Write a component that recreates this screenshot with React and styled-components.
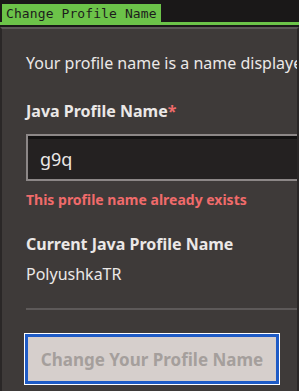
import React from 'react';
import styled, {createGlobalStyle} from 'styled-components';

const GlobalStyle = createGlobalStyle`
    html, body {
        margin: 0;
        padding: 0;
        background: #1a1818;
    }
    * {
        box-sizing: border-box;
    }
`;

const App = () => {
    return (
        <>
            <GlobalStyle />
            <Page>
                <TabRow>
                    <Tab>Change Profile Name</Tab>
                </TabRow>
                <GreenBar />
                <Panel>
                    <Intro>Your profile name is a name displayed to other players in game.</Intro>
                    <Label $top={26}>Java Profile Name<Required>*</Required></Label>
                    <Input defaultValue="g9q" />
                    <ErrorText>This profile name already exists</ErrorText>
                    <Label $top={24}>Current Java Profile Name</Label>
                    <Value>PolyushkaTR</Value>
                    <Divider />
                    <Button disabled>Change Your Profile Name</Button>
                </Panel>
            </Page>
        </>
    );
}

const Page = styled.div`
    width: 299px;
    height: 391px;
    display: flex;
    flex-direction: column;
    overflow: hidden;
    background: #1a1818;
`;

const TabRow = styled.div`
    display: flex;
    padding: 4px 0 0 2px;
`;

const Tab = styled.div`
    width: 159px;
    height: 18px;
    background: #6cc349;
    color: #1c1c1c;
    font-family: "DejaVu Sans Mono", monospace;
    font-size: 13px;
    line-height: 19px;
    padding-left: 4px;
    letter-spacing: 0.1px;
`;

const GreenBar = styled.div`
    height: 3px;
    background: #6cc349;
`;

const Panel = styled.div`
    flex: 1;
    margin-top: 2px;
    border-top: 2px solid #5b5757;
    border-left: 2px solid #2a2727;
    border-right: 2px solid #2a2727;
    background: #3e3a39;
    padding: 23px 0 0 24px;
    overflow: hidden;
    font-family: "Noto Sans", sans-serif;
`;

const Intro = styled.div`
    color: #ebe8e7;
    font-size: 16px;
    line-height: 22px;
    white-space: nowrap;
`;

const Label = styled.div`
    margin-top: ${p => p.$top}px;
    color: #ebe8e7;
    font-size: 16px;
    font-weight: 700;
    line-height: 22px;
    white-space: nowrap;
`;

const Required = styled.span`
    color: #f06b6b;
`;

const Input = styled.input`
    display: block;
    margin-top: 12px;
    width: 300px;
    height: 47px;
    border: 2px solid #8c8787;
    background: #242121;
    box-shadow: inset 0 3px 0 #121111;
    color: #ebe8e7;
    font-family: "Noto Sans", sans-serif;
    font-size: 18px;
    padding: 2px 12px 0;
    outline: none;
`;

const ErrorText = styled.div`
    margin-top: 10px;
    color: #f06b6b;
    font-size: 14px;
    font-weight: 700;
    line-height: 18px;
    white-space: nowrap;
`;

const Value = styled.div`
    margin-top: 8px;
    color: #ebe8e7;
    font-size: 16px;
    line-height: 22px;
`;

const Divider = styled.div`
    margin-top: 23px;
    height: 2px;
    background: #5d5959;
`;

const Button = styled.button`
    display: block;
    margin: 24px 0 0 -1px;
    width: 254px;
    height: 50px;
    border: 3px solid #1e5bc6;
    outline: 1px solid #ffffff;
    outline-offset: 0;
    background: #d6cfcc;
    color: #a59f9c;
    font-family: "Noto Sans", sans-serif;
    font-size: 17px;
    font-weight: 700;
    padding: 0;
`;

export default App;
